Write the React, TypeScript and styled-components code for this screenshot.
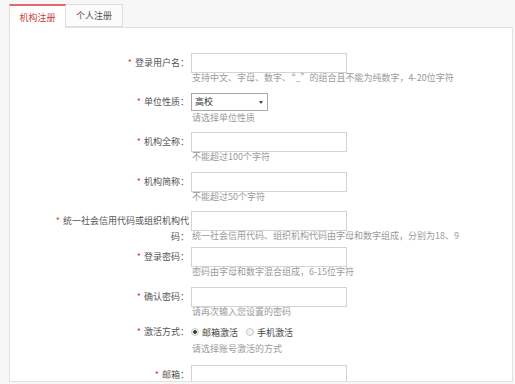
import React from "react";
import styled, { createGlobalStyle } from "styled-components";

const Global = createGlobalStyle`
  html, body { margin: 0; padding: 0; background: #f7f7f7; }
  body { font-family: "Noto Sans CJK SC", "Noto Sans", sans-serif; }
`;

const Page = styled.div`
  padding: 4px 2px 0 9px;
  height: 384px;
  box-sizing: border-box;
  overflow: hidden;
`;

const TabBar = styled.div`
  display: flex;
  height: 23px;
`;

const Tab = styled.div<{ $active?: boolean }>`
  position: relative;
  z-index: 1;
  width: 57px;
  height: ${(p) => (p.$active ? 24 : 23)}px;
  box-sizing: border-box;
  display: flex;
  align-items: center;
  justify-content: center;
  font-size: 9px;
  color: ${(p) => (p.$active ? "#c4403a" : "#555")};
  background: ${(p) => (p.$active ? "#fff" : "#fbfbfb")};
  border: 1px solid #dedede;
  border-top: ${(p) => (p.$active ? "2px solid #e0676a" : "1px solid #dedede")};
  border-bottom: ${(p) => (p.$active ? "none" : "1px solid #dedede")};
  border-left: ${(p) => (p.$active ? "1px solid #dedede" : "none")};
`;

const Panel = styled.div`
  background: #fff;
  border: 1px solid #e2e2e2;
  height: 355px;
  box-sizing: border-box;
  overflow: hidden;
`;

const Form = styled.form`
  padding: 25px 0 0 45px;
  display: flex;
  flex-direction: column;
`;

const Row = styled.div<{ $gap?: number }>`
  display: flex;
  align-items: flex-start;
  margin-bottom: ${(p) => p.$gap ?? 9.5}px;
`;

const Label = styled.label<{ $lh?: number; $pt?: number }>`
  width: 134px;
  margin-right: 2px;
  text-align: right;
  font-size: 9px;
  line-height: ${(p) => p.$lh ?? 20}px;
  padding-top: ${(p) => p.$pt ?? 0}px;
  color: #555;
  flex-shrink: 0;
`;

const Star = styled.span`
  color: #e0393e;
  margin-right: 3px;
`;

const Field = styled.div`
  display: flex;
  flex-direction: column;
`;

const Input = styled.input`
  display: block;
  width: 156px;
  height: 20px;
  box-sizing: border-box;
  border: 1px solid #d3d3d3;
  margin: 0;
  padding: 0 4px;
  font-size: 9px;
  outline: none;
`;

const SelectWrap = styled.div`
  position: relative;
  width: 77px;
  height: 18px;
`;

const Select = styled.select`
  display: block;
  appearance: none;
  width: 77px;
  height: 18px;
  box-sizing: border-box;
  border: 1px solid #a8a8a8;
  border-radius: 0;
  background: #fff;
  font-family: "Noto Sans CJK SC", sans-serif;
  font-size: 9px;
  color: #333;
  padding: 0 3px;
  margin: 0;
  outline: none;
`;

const Caret = styled.span`
  position: absolute;
  right: 5px;
  top: 8px;
  width: 0;
  height: 0;
  border-left: 2px solid transparent;
  border-right: 2px solid transparent;
  border-top: 3px solid #444;
  pointer-events: none;
`;

const Hint = styled.div<{ $mt?: number }>`
  font-size: 9px;
  line-height: 10px;
  color: #9a9a9a;
  margin-top: ${(p) => p.$mt ?? 0}px;
  padding-left: 1px;
  white-space: nowrap;
`;

const RadioGroup = styled.div`
  display: flex;
  align-items: center;
  height: 12px;
  font-size: 9px;
  color: #444;
  gap: 8px;
`;

const RadioOption = styled.span`
  display: flex;
  align-items: center;
  gap: 3px;
`;

const RadioDot = styled.span<{ $checked?: boolean }>`
  width: 6px;
  height: 6px;
  border-radius: 50%;
  border: 1px solid #c8c8c8;
  background: ${(p) => (p.$checked ? "radial-gradient(circle, #444 0 1.6px, #f3f3f3 1.8px)" : "#f3f3f3")};
  box-sizing: content-box;
`;

type TextRow = { label: string; hint: string };

export default function App() {
  return (
    <>
      <Global />
      <Page>
        <TabBar>
          <Tab $active>机构注册</Tab>
          <Tab>个人注册</Tab>
        </TabBar>
        <Panel>
          <Form onSubmit={(e) => e.preventDefault()}>
            <Row>
              <Label><Star>*</Star>登录用户名：</Label>
              <Field>
                <Input />
                <Hint>支持中文、字母、数字、“_”的组合且不能为纯数字，4-20位字符</Hint>
              </Field>
            </Row>
            <Row>
              <Label $lh={18}><Star>*</Star>单位性质：</Label>
              <Field>
                <SelectWrap>
                  <Select defaultValue="高校">
                    <option>高校</option>
                    <option>企业</option>
                  </Select>
                  <Caret />
                </SelectWrap>
                <Hint $mt={2}>请选择单位性质</Hint>
              </Field>
            </Row>
            {([
              { label: "机构全称：", hint: "不能超过100个字符" },
              { label: "机构简称：", hint: "不能超过50个字符" },
            ] as TextRow[]).map((r) => (
              <Row key={r.label}>
                <Label><Star>*</Star>{r.label}</Label>
                <Field>
                  <Input />
                  <Hint>{r.hint}</Hint>
                </Field>
              </Row>
            ))}
            <Row $gap={2}>
              <Label $lh={16} $pt={2}><Star>*</Star>统一社会信用代码或组织机构代码：</Label>
              <Field>
                <Input />
                <Hint>统一社会信用代码、组织机构代码由字母和数字组成，分别为18、9</Hint>
              </Field>
            </Row>
            <Row>
              <Label><Star>*</Star>登录密码：</Label>
              <Field>
                <Input type="password" />
                <Hint>密码由字母和数字混合组成，6-15位字符</Hint>
              </Field>
            </Row>
            <Row>
              <Label><Star>*</Star>确认密码：</Label>
              <Field>
                <Input type="password" />
                <Hint>请再次输入您设置的密码</Hint>
              </Field>
            </Row>
            <Row $gap={11}>
              <Label $lh={12}><Star>*</Star>激活方式：</Label>
              <Field>
                <RadioGroup>
                  <RadioOption><RadioDot $checked />邮箱激活</RadioOption>
                  <RadioOption><RadioDot />手机激活</RadioOption>
                </RadioGroup>
                <Hint $mt={6}>请选择账号激活的方式</Hint>
              </Field>
            </Row>
            <Row>
              <Label><Star>*</Star>邮箱：</Label>
              <Field>
                <Input />
              </Field>
            </Row>
          </Form>
        </Panel>
      </Page>
    </>
  );
}
